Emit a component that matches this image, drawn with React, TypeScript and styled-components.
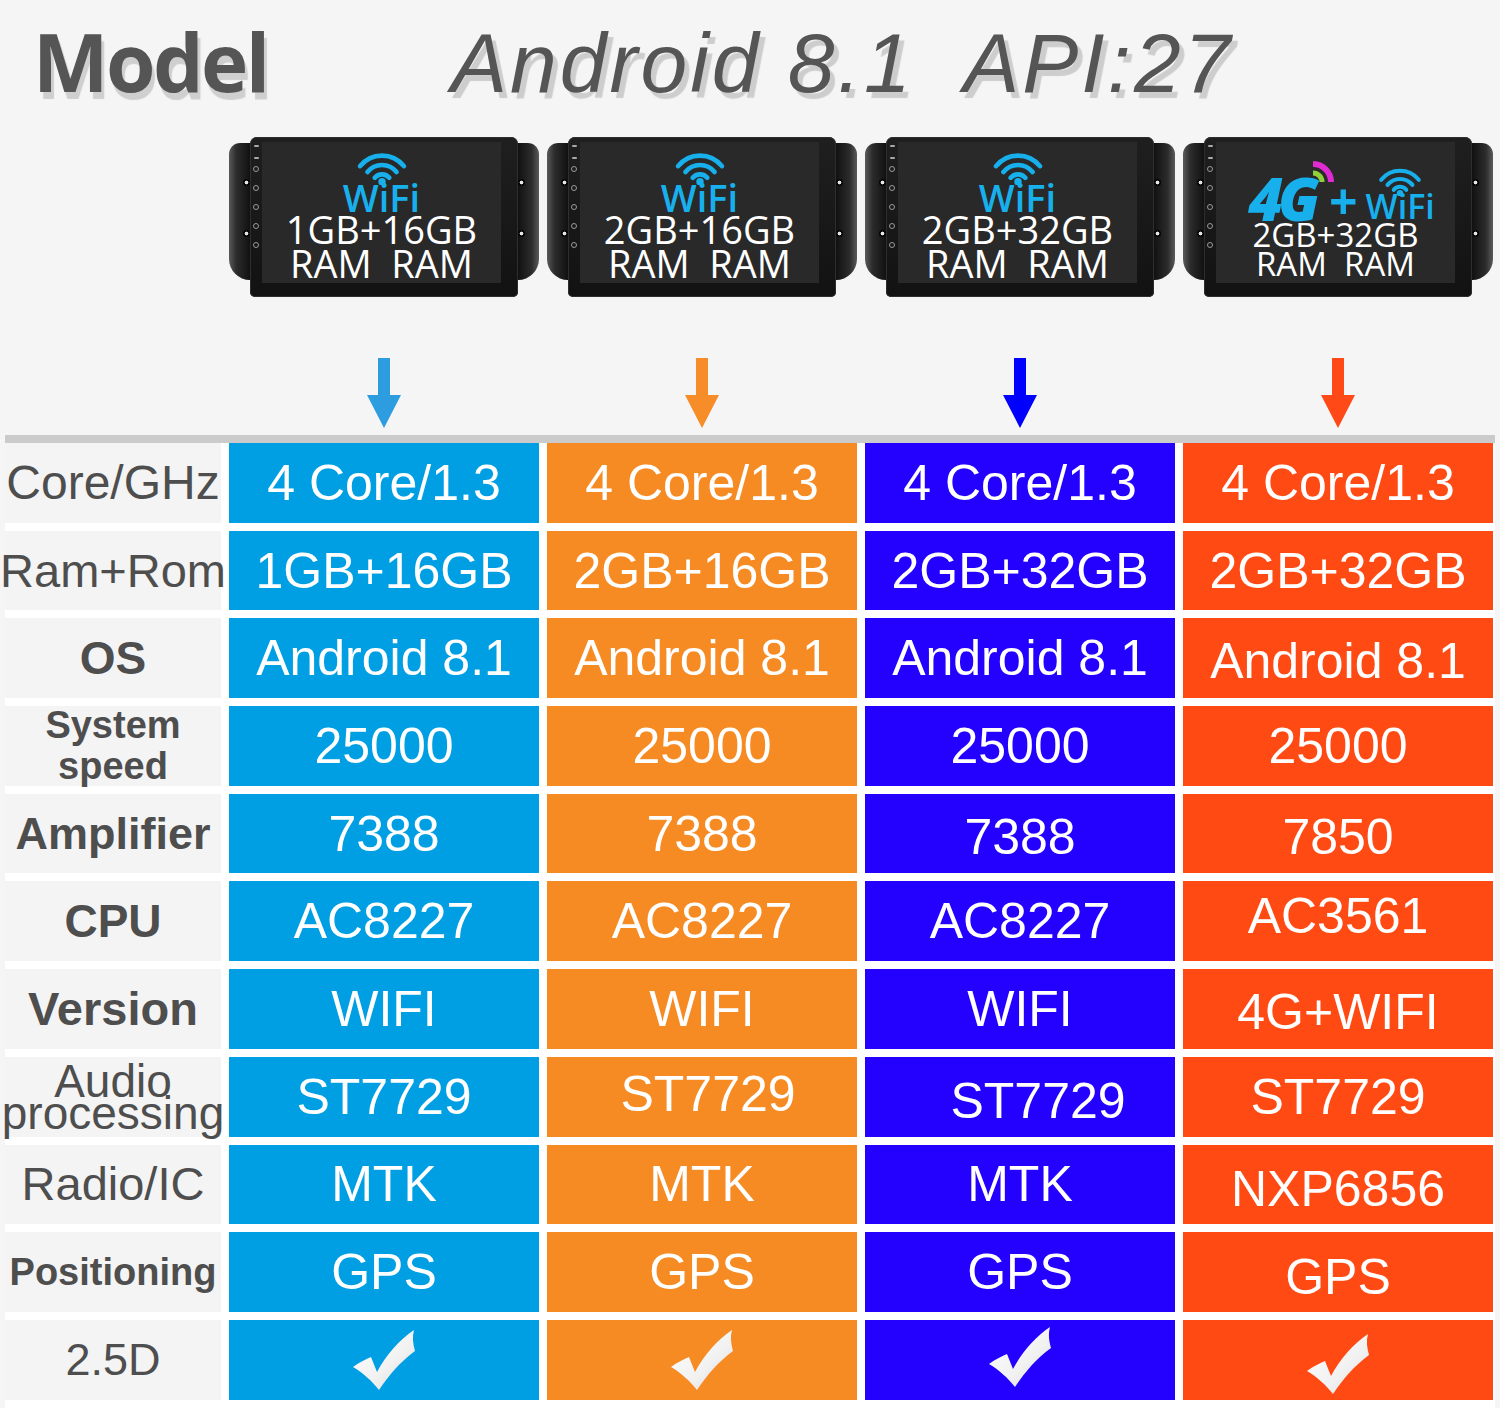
import React from 'react'
import styled, { createGlobalStyle } from 'styled-components'

const GlobalStyle = createGlobalStyle`
  html, body {
    margin: 0;
    background: #f5f5f5;
    font-family: 'Liberation Sans', Arial, sans-serif;
  }
`

const COLUMNS = '216px repeat(4, 310px)'
const CELL_COLORS = ['#009fe3', '#f68b24', '#2400ff', '#ff4a14']
const ARROW_COLORS = ['#2d9de0', '#f78d28', '#0000ff', '#ff4a17']
const CYAN = '#17b0ec'
const CHECK = '✓'

type Label = { text: string[]; size: number; weight: number; lh: number }

const ROWS: { label: Label; values: string[] }[] = [
  { label: { text: ['Core/GHz'], size: 48, weight: 400, lh: 50 }, values: ['4 Core/1.3', '4 Core/1.3', '4 Core/1.3', '4 Core/1.3'] },
  { label: { text: ['Ram+Rom'], size: 47, weight: 400, lh: 50 }, values: ['1GB+16GB', '2GB+16GB', '2GB+32GB', '2GB+32GB'] },
  { label: { text: ['OS'], size: 46, weight: 700, lh: 50 }, values: ['Android 8.1', 'Android 8.1', 'Android 8.1', 'Android 8.1'] },
  { label: { text: ['System', 'speed'], size: 38, weight: 700, lh: 41 }, values: ['25000', '25000', '25000', '25000'] },
  { label: { text: ['Amplifier'], size: 45, weight: 700, lh: 50 }, values: ['7388', '7388', '7388', '7850'] },
  { label: { text: ['CPU'], size: 46, weight: 700, lh: 50 }, values: ['AC8227', 'AC8227', 'AC8227', 'AC3561'] },
  { label: { text: ['Version'], size: 47, weight: 700, lh: 50 }, values: ['WIFI', 'WIFI', 'WIFI', '4G+WIFI'] },
  { label: { text: ['Audio', 'processing'], size: 46, weight: 400, lh: 32 }, values: ['ST7729', 'ST7729', 'ST7729', 'ST7729'] },
  { label: { text: ['Radio/IC'], size: 47, weight: 400, lh: 50 }, values: ['MTK', 'MTK', 'MTK', 'NXP6856'] },
  { label: { text: ['Positioning'], size: 38, weight: 700, lh: 50 }, values: ['GPS', 'GPS', 'GPS', 'GPS'] },
  { label: { text: ['2.5D'], size: 45, weight: 400, lh: 50 }, values: [CHECK, CHECK, CHECK, CHECK] },
]

// small nudges where the original artwork is not centred
const OFFSETS: Record<string, [number, number]> = {
  '2-3': [0, 3],
  '4-2': [0, 3],
  '4-3': [0, 3],
  '5-3': [0, -5],
  '6-3': [0, 3],
  '7-1': [6, -3],
  '7-2': [18, 4],
  '8-3': [0, 5],
  '9-3': [0, 5],
  '10-2': [0, -3],
  '10-3': [0, 4],
}

const Page = styled.div`
  width: 1500px;
  height: 1408px;
  overflow: hidden;
`

const Header = styled.header`
  display: flex;
  align-items: baseline;
  height: 130px;
  padding-top: 21px;
  box-sizing: border-box;
  color: #555;
`

const ModelTitle = styled.h1`
  width: 451px;
  box-sizing: border-box;
  margin: 0;
  padding-left: 33px;
  font: 700 80px/1 'Open Sans', sans-serif;
  letter-spacing: -2.5px;
  text-shadow: 3px 7px 1px #cfcfcf;
`

const ApiTitle = styled.h2`
  margin: 0;
  font: italic 400 84px/1 'Liberation Sans', Arial, sans-serif;
  letter-spacing: 3px;
  white-space: pre;
  text-shadow: 5px 6px 1px #cdcdcd;
`

const Band = styled.div<{ $top: number }>`
  display: grid;
  grid-template-columns: ${COLUMNS};
  column-gap: 8px;
  width: 1490px;
  margin: ${p => p.$top}px 0 0 5px;
`

const DeviceFrame = styled.div`
  display: flex;
  height: 160px;
`

const Wing = styled.div<{ $side: 'left' | 'right' }>`
  width: 21px;
  height: 137px;
  margin-top: 6px;
  box-sizing: border-box;
  padding-top: 36px;
  display: flex;
  flex-direction: column;
  gap: 44px;
  align-items: ${p => (p.$side === 'left' ? 'flex-end' : 'flex-start')};
  background: linear-gradient(
    ${p => (p.$side === 'left' ? '90deg' : '270deg')},
    #5a5a5a 0%,
    #2c2c2c 35%,
    #111 100%
  );
  border-radius: ${p => (p.$side === 'left' ? '14px 0 0 26px' : '0 14px 26px 0')};
`

const Screw = styled.span`
  width: 7px;
  height: 7px;
  border-radius: 50%;
  background: radial-gradient(circle, #e6e6e6 0 1.6px, #050505 2.2px);
`

const Body = styled.div`
  width: 268px;
  height: 160px;
  box-sizing: border-box;
  display: flex;
  padding: 5px 17px 14px 0;
  background: linear-gradient(#1f1f1f, #121212);
  border-radius: 7px 7px 5px 5px;
  box-shadow: inset 0 0 0 1px #2e2e2e;
`

const KeyStrip = styled.div`
  width: 12px;
  display: flex;
  flex-direction: column;
  align-items: center;
`

const Key = styled.span<{ $kind: 'dash' | 'ring'; $gap: number }>`
  margin-top: ${p => p.$gap}px;
  width: ${p => (p.$kind === 'dash' ? 5 : 4)}px;
  height: ${p => (p.$kind === 'dash' ? 2 : 4)}px;
  border-radius: ${p => (p.$kind === 'dash' ? '1px' : '50%')};
  ${p => (p.$kind === 'dash' ? 'background: #a8a8a8;' : 'border: 1px solid #9a9a9a;')}
`

const KEYS: { kind: 'dash' | 'ring'; gap: number }[] = [
  { kind: 'dash', gap: 3 },
  { kind: 'dash', gap: 10 },
  { kind: 'ring', gap: 7 },
  { kind: 'ring', gap: 13 },
  { kind: 'ring', gap: 13 },
  { kind: 'ring', gap: 13 },
  { kind: 'ring', gap: 13 },
]

const Screen = styled.div<{ $pad: number }>`
  flex: 1;
  display: flex;
  flex-direction: column;
  align-items: center;
  padding-top: ${p => p.$pad}px;
  background: #292929;
  color: #fff;
  font-family: 'Open Sans', sans-serif;
`

const WifiWord = styled.div<{ $size: number }>`
  margin-top: -3px;
  color: ${CYAN};
  font-size: ${p => p.$size}px;
  font-weight: 600;
  line-height: ${p => Math.round(p.$size * 0.8)}px;
`

const Spec = styled.div<{ $size: number; $lh: number }>`
  font-size: ${p => p.$size}px;
  line-height: ${p => p.$lh}px;
  font-weight: 400;
  white-space: pre;
`

const TopRow = styled.div`
  display: flex;
  align-items: flex-end;
  height: 62px;
  margin-left: 12px;
`

const FourG = styled.span`
  color: ${CYAN};
  font: italic 800 60px/1 'Open Sans', sans-serif;
  letter-spacing: -5px;
  margin-bottom: -8px;
`

const Signal = styled.svg`
  align-self: flex-start;
  margin: 2px 0 0 -6px;
`

const Plus = styled.span`
  color: ${CYAN};
  font: 700 50px/1 'Open Sans', sans-serif;
  margin: 0 8px -6px -6px;
`

const WifiStack = styled.div`
  display: flex;
  flex-direction: column;
  align-items: center;
`

const Arrows = styled.div`
  display: flex;
  justify-content: center;
  height: 70px;
`

const Rule = styled.div`
  width: 1490px;
  height: 8px;
  margin: 7px 0 0 5px;
  background: #cbcbcb;
`

const Table = styled.div`
  display: grid;
  grid-template-columns: ${COLUMNS};
  grid-auto-rows: 79.7px;
  gap: 8px;
  width: 1490px;
  margin-left: 5px;
  background: #fff;
`

const LabelCell = styled.div<{ $size: number; $weight: number; $lh: number }>`
  display: flex;
  flex-direction: column;
  align-items: center;
  justify-content: center;
  background: #f4f4f4;
  color: #4e4e4e;
  font-size: ${p => p.$size}px;
  font-weight: ${p => p.$weight};
  line-height: ${p => p.$lh}px;
  white-space: nowrap;
`

const ValueCell = styled.div<{ $bg: string }>`
  display: flex;
  align-items: center;
  justify-content: center;
  background: ${p => p.$bg};
  color: #fff;
  font: 400 50px/1 'Liberation Sans', Arial, sans-serif;
  white-space: nowrap;
`

const ValueText = styled.span<{ $dx: number; $dy: number }>`
  display: flex;
  transform: translate(${p => p.$dx}px, ${p => p.$dy}px);
`

function WifiIcon({ width }: { width: number }) {
  return (
    <svg width={width} height={(width * 38) / 60} viewBox="0 0 60 38" fill="none" stroke={CYAN} strokeWidth="5" strokeLinecap="round">
      <path d="M6.5 17.3A30 30 0 0 1 53.5 17.3" />
      <path d="M14.4 23.6A20 20 0 0 1 45.6 23.6" />
      <path d="M22.2 29.8A10 10 0 0 1 37.8 29.8" />
      <circle cx="30" cy="34" r="4" fill={CYAN} stroke="none" />
    </svg>
  )
}

function CheckMark() {
  return (
    <svg width="64" height="61" viewBox="0 0 64 61">
      <defs>
        <linearGradient id="chk" x1="0" y1="0" x2="1" y2="1">
          <stop offset="0" stopColor="#ffffff" />
          <stop offset="0.6" stopColor="#f1f1f1" />
          <stop offset="1" stopColor="#d6d6d6" />
        </linearGradient>
      </defs>
      <path
        d="M1 38C8 33 14 30 19 28L25 43C34 26 47 11 62 1C60 8 61 15 63 22C48 33 37 46 27 61C20 52 11 44 1 38Z"
        fill="url(#chk)"
      />
    </svg>
  )
}

function Device({ pad, children }: { pad: number; children: React.ReactNode }) {
  return (
    <DeviceFrame>
      <Wing $side="left">
        <Screw />
        <Screw />
      </Wing>
      <Body>
        <KeyStrip>
          {KEYS.map((k, i) => (
            <Key key={i} $kind={k.kind} $gap={k.gap} />
          ))}
        </KeyStrip>
        <Screen $pad={pad}>{children}</Screen>
      </Body>
      <Wing $side="right">
        <Screw />
        <Screw />
      </Wing>
    </DeviceFrame>
  )
}

function WifiDevice({ ram, rom }: { ram: string; rom: string }) {
  return (
    <Device pad={8}>
      <WifiIcon width={56} />
      <WifiWord $size={38}>WiFi</WifiWord>
      <Spec $size={38} $lh={35}>{`${ram}+${rom}`}</Spec>
      <Spec $size={38} $lh={32}>{'RAM  RAM'}</Spec>
    </Device>
  )
}

function FourGDevice() {
  return (
    <Device pad={16}>
      <TopRow>
        <FourG>4G</FourG>
        <Signal width="26" height="24" viewBox="0 0 26 24" fill="none">
          <path d="M4 4A18 18 0 0 1 22 22" stroke="#e02ad2" strokeWidth="6" />
          <path d="M4 13A9 9 0 0 1 13 22" stroke="#8fd13a" strokeWidth="5" />
        </Signal>
        <Plus>+</Plus>
        <WifiStack>
          <WifiIcon width={48} />
          <WifiWord $size={34}>WiFi</WifiWord>
        </WifiStack>
      </TopRow>
      <Spec $size={33} $lh={29}>2GB+32GB</Spec>
      <Spec $size={33} $lh={29}>{'RAM  RAM'}</Spec>
    </Device>
  )
}

export default function App() {
  return (
    <Page>
      <GlobalStyle />
      <Header>
        <ModelTitle>Model</ModelTitle>
        <ApiTitle>{'Android 8.1  API:27'}</ApiTitle>
      </Header>

      <Band $top={7}>
        <div />
        <WifiDevice ram="1GB" rom="16GB" />
        <WifiDevice ram="2GB" rom="16GB" />
        <WifiDevice ram="2GB" rom="32GB" />
        <FourGDevice />
      </Band>

      <Band $top={61}>
        <div />
        {ARROW_COLORS.map(color => (
          <Arrows key={color}>
            <svg width="34" height="70" viewBox="0 0 34 70">
              <path d="M11 0h12v37h11L17 70 0 37h11z" fill={color} />
            </svg>
          </Arrows>
        ))}
      </Band>

      <Rule />

      <Table>
        {ROWS.map((row, r) => (
          <React.Fragment key={r}>
            <LabelCell $size={row.label.size} $weight={row.label.weight} $lh={row.label.lh}>
              {row.label.text.map(line => (
                <span key={line}>{line}</span>
              ))}
            </LabelCell>
            {row.values.map((value, c) => {
              const [dx, dy] = OFFSETS[`${r}-${c}`] ?? [0, 0]
              return (
                <ValueCell key={c} $bg={CELL_COLORS[c]}>
                  <ValueText $dx={dx} $dy={dy}>
                    {value === CHECK ? <CheckMark /> : value}
                  </ValueText>
                </ValueCell>
              )
            })}
          </React.Fragment>
        ))}
        <LabelCell $size={40} $weight={400} $lh={50} />
        {CELL_COLORS.map(color => (
          <ValueCell key={color} $bg={color} />
        ))}
      </Table>
    </Page>
  )
}
